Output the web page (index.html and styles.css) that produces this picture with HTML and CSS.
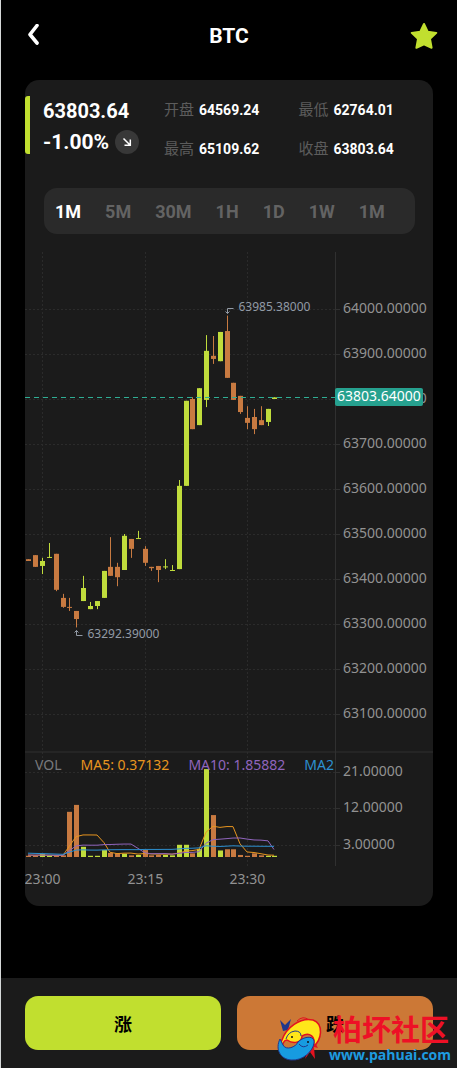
FILE: index.html
```html
<!DOCTYPE html>
<html lang="zh-CN">
<head>

	<meta charset="utf-8" />
	<meta name="viewport" content="width=device-width, initial-scale=1" />
	<title>BTC</title>

	<link rel="stylesheet" href="styles.css">

</head>

<body>

<header class="topbar">
	<button class="icon-btn" type="button" aria-label="返回">
		<svg width="24" height="24" viewBox="0 0 24 24"><path d="M15 1.500 L8 10.500 L15 19" fill="none" stroke="#fff" stroke-width="3.600" stroke-linecap="round" stroke-linejoin="round" /></svg>
	</button>
	<h1>BTC</h1>
	<button class="icon-btn" type="button" aria-label="收藏">
		<svg width="28" height="28" viewBox="0 0 28 28"><path d="M14 2 L17.700 9.700 L26.300 10.900 L20 16.900 L21.600 25.800 L14 22.400 L6.400 25.800 L8 16.900 L1.700 10.900 L10.300 9.700 Z" fill="#c1df2f" stroke="#c1df2f" stroke-width="2" stroke-linejoin="round" /></svg>
	</button>
</header>

<main class="card">
	<section class="summary">
		<div class="quote">
			<div class="price">63803.64</div>
			<div class="change">
				-1.00%
				<span class="trend">
					<svg width="24" height="24" viewBox="0 0 24 24"><path d="M8.500 8.500 L15 15 M15.300 9.500 V15.300 H9.500" fill="none" stroke="#fff" stroke-width="1.500" /></svg>
				</span>
			</div>
		</div>
		<dl class="stats">
			<div><dt>开盘</dt><dd>64569.24</dd></div>
			<div><dt>最低</dt><dd>62764.01</dd></div>
			<div><dt>最高</dt><dd>65109.62</dd></div>
			<div><dt>收盘</dt><dd>63803.64</dd></div>
		</dl>
	</section>

	<nav class="periods">
		<button type="button" class="active">1M</button>
		<button type="button">5M</button>
		<button type="button">30M</button>
		<button type="button">1H</button>
		<button type="button">1D</button>
		<button type="button">1W</button>
		<button type="button">1M</button>
	</nav>

	<svg id="chart" class="chart"></svg>
</main>

<footer class="actions">
	<button type="button" class="up">涨</button>
	<button type="button" class="down">跌</button>
</footer>

<div class="watermark">
	<svg width="48" height="46" viewBox="0 0 48 46">
		<path d="M8 15 L5 4 L10 9 L16 3 L13 14 Z" fill="#20378c" />
		<path d="M22 5 Q28 -1 34 4" fill="none" stroke="#e3121f" />
		<path d="M37 21 L43 32 L39 31 L40 43 L35 36 L30 43 L34 30 Z" fill="#e3121f" />
		<path d="M7 24 C11 12 25 1 38 4 C49 8 47 24 38 31 C42 20 34 16 27 20 C27 27 18 28 12 24 C9 24 7 28 7 33 C4 31 5 27 7 24 Z" fill="#ffe61a" stroke="#e3121f" stroke-width="1.500" />
		<path d="M5 23 C0 33 5 43 16 44 C28 45 38 35 39 27 C40 19 29 20 23 26 C21 31 11 35 8 29 C7 27 6 25 5 23 Z" fill="#179be0" stroke="#20378c" />
		<path d="M24 28 Q28 33 33 29 M11 23 Q13 16 20 15 Q26 15 26 20" fill="none" stroke="#20378c" />
		<circle cx="17" cy="21" r="1" fill="#111" />
		<circle cx="33" cy="26" r="1" fill="#111" />
	</svg>
	<div>
		<div class="wm-name">柏坏社区</div>
		<div class="wm-url">www.pahuai.com</div>
	</div>
</div>

<script src="chart.js"></script>

</body>
</html>
```

FILE: styles.css
```css
* {
	box-sizing: border-box;
}
body {
	display: flex;
	flex-direction: column;
	position: relative;
	min-height: 100vh;
	margin: 0;
	border-left: 1px solid #d5d8d8;
	background: #000;
	color: #fff;
	font-family: Roboto, 'Noto Sans CJK SC', sans-serif;
}
button {
	padding: 0;
	border: 0;
	background: none;
	font-family: inherit;
	font-weight: bold;
	cursor: pointer;
}
svg {
	display: block;
}

.topbar {
	display: flex;
	align-items: center;
	justify-content: space-between;
	height: 72px;
	padding: 0 19px;
}
.topbar h1 {
	margin: 0;
	font-size: 21px;
}
.icon-btn {
	display: flex;
	justify-content: center;
	width: 28px;
}

.card {
	margin: 8px 24px 72px 24px;
	padding-top: 16px;
	border-radius: 14px;
	background: #1b1b1b;
}

.summary {
	display: flex;
	height: 67px;
}
.quote {
	width: 139px;
	height: 58px;
	padding-left: 13px;
	border-left: 5px solid #c1df2f;
	border-radius: 3px;
	font-size: 20px;
	font-weight: bold;
}
.price {
	height: 30px;
	line-height: 30px;
}
.change {
	display: flex;
	align-items: center;
	gap: 6px;
	height: 32px;
	font-size: 21px;
}
.trend {
	border-radius: 50%;
	background: #383838;
}
.stats {
	display: grid;
	flex: 1;
	grid-template-columns: 1fr 1fr;
	grid-template-rows: 28px 28px;
	row-gap: 11px;
	margin: 0;
}
.stats div {
	display: flex;
	align-items: center;
	gap: 5px;
}
.stats dt {
	color: #5c5c5c;
	font-size: 15px;
	line-height: 20px;
}
.stats dd {
	margin: 0;
	font-size: 14px;
	font-weight: bold;
}

.periods {
	display: flex;
	gap: 24px;
	height: 46px;
	margin: 25px 18px 18px 19px;
	padding-left: 11px;
	border-radius: 13px;
	background: #2a2a2a;
}
.periods button {
	color: #636363;
	font-size: 18px;
}
.periods .active {
	color: #fff;
}

.chart {
	width: 100%;
	height: 654px;
	font-family: 'Noto Sans', sans-serif;
	font-size: 14px;
}
.chart .grid {
	stroke: #2b2b2b;
	stroke-dasharray: 2 2;
}
.chart .axis {
	stroke: #303030;
}
.chart .label {
	fill: #929292;
}
.chart .mark {
	fill: #929aa5;
	font-size: 12px;
}
.chart .mark-arrow {
	fill: none;
	stroke: #929aa5;
}
.chart .last {
	stroke: #2fae94;
	stroke-dasharray: 5 4;
}
.chart .tag {
	fill: #26a18f;
}
.chart .tag-text {
	fill: #fff;
}
.chart .rise {
	fill: #c0dc3c;
}
.chart .fall {
	fill: #c87a41;
}
.chart .ma {
	fill: none;
	stroke-width: 1;
}

.actions {
	display: flex;
	gap: 16px;
	margin-top: auto;
	padding: 18px 24px;
	background: #1b1b1b;
}
.actions button {
	flex: 1;
	height: 54px;
	border-radius: 13px;
	color: #000;
	font-size: 18px;
}
.actions .up {
	background: #c1df2f;
}
.actions .down {
	background: #cc7836;
}

/* site stamp, lies over the footer */
.watermark {
	display: flex;
	gap: 6px;
	position: absolute;
	right: 6px;
	bottom: 4px;
	pointer-events: none;
}
.wm-name {
	padding-left: 4px;
	color: #ee1026;
	font-size: 29px;
	font-weight: bold;
	line-height: 30px;
}
.wm-url {
	color: #1e9be0;
	font-family: 'Open Sans', sans-serif;
	font-size: 14px;
	font-weight: bold;
	line-height: 18px;
}
```

FILE: chart.js
```js
// open, close, high, low, volume
var candles = [
	[63444, 63440, 63444, 63440, 0.3],
	[63453, 63427, 63453, 63427, 0.3],
	[63429, 63440, 63447, 63411, 0.7],
	[63447, 63449, 63480, 63447, 0.3],
	[63456, 63376, 63456, 63373, 0.3],
	[63358, 63338, 63367, 63336, 0.4],
	[63338, 63336, 63358, 63329, 11.1],
	[63329, 63311, 63329, 63292.39, 12.8],
	[63351, 63380, 63407, 63351, 2.5],
	[63333, 63340, 63349, 63333, 0.3],
	[63340, 63351, 63351, 63333, 0.3],
	[63358, 63418, 63418, 63358, 1.7],
	[63427, 63407, 63493, 63407, 1],
	[63427, 63404, 63436, 63384, 0.9],
	[63420, 63496, 63500, 63420, 0.8],
	[63489, 63467, 63489, 63447, 0.4],
	[63489, 63491, 63507, 63489, 0.5],
	[63467, 63436, 63473, 63429, 1.7],
	[63427, 63424, 63427, 63418, 0.4],
	[63429, 63420, 63429, 63393, 0.5],
	[63426, 63428, 63444, 63422, 0.5],
	[63418, 63420, 63431, 63418, 0.4],
	[63422, 63607, 63620, 63422, 3],
	[63607, 63796, 63796, 63607, 3],
	[63800, 63733, 63804, 63733, 0.9],
	[63742, 63824, 63824, 63742, 2],
	[63798, 63907, 63942, 63782, 21.6],
	[63896, 63889, 63940, 63878, 10.3],
	[63884, 63949, 63949, 63884, 1.6],
	[63951, 63847, 63985.38, 63847, 1.9],
	[63836, 63798, 63836, 63798, 1.9],
	[63807, 63771, 63807, 63767, 0.5],
	[63758, 63747, 63784, 63733, 0.3],
	[63760, 63733, 63778, 63722, 0.9],
	[63753, 63742, 63784, 63742, 0.4],
	[63749, 63778, 63778, 63740, 0.3],
	[63800, 63803.64, 63803.64, 63800, 0.3]
];

// volumes of the 20 minutes before the first candle
var earlier = [1.5, 1.5, 1.5, 1.5, 1.5, 1.5, 1.5, 1.5, 1.5, 1.5, 0.5, 0.5, 0.5, 0.5, 0.5, 0.5, 0.5, 0.5, 0.5, 0.5];
var volumes = earlier.concat(candles.map(function(c) { return c[4]; }));

var chart = document.getElementById('chart');
var AXIS = 97;
var SLOTS = 45.5;
var VOL_TOP = 500;
var VOL_BASE = 605;
var BOTTOM = 614;

var priceY = function(p) {
	return 57 + (64000 - p) * 0.45;
};

var volY = function(v) {
	return VOL_BASE - v * 4.07;
};

var line = function(cls, x1, y1, x2, y2) {
	return '<line class="' + cls + '" x1="' + x1 + '" y1="' + y1 + '" x2="' + x2 + '" y2="' + y2 + '" />';
};

var rect = function(cls, x, y, w, h) {
	return '<rect class="' + cls + '" x="' + x + '" y="' + y + '" width="' + w + '" height="' + h + '" />';
};

var text = function(cls, x, y, s, anchor) {
	return '<text class="' + cls + '" x="' + x + '" y="' + y + '" text-anchor="' + (anchor || 'start') + '">' + s + '</text>';
};

var average = function(i, n) {
	var end = earlier.length + i + 1;
	return volumes.slice(end - n, end).reduce(function(a, b) { return a + b; }) / n;
};

var draw = function() {
	var width = chart.clientWidth || chart.getBoundingClientRect().width;
	var plot = width - AXIS;
	var axisX = plot - 0.5;
	var out = '';

	var x = function(i) {
		return Math.round((i + 0.5) * plot / SLOTS);
	};

	var gridRow = function(y, label) {
		y = Math.round(y) + 0.5;
		out += line('grid', 0, y, plot, y);
		out += line('axis', plot, y, plot + 4, y);
		out += text('label', plot + 7, y + 3, label);
	};

	for (var p = 64000; p >= 63100; p -= 100) {
		gridRow(priceY(p), p.toFixed(5));
	}
	[21, 12, 3].forEach(function(v) {
		gridRow(volY(v), v.toFixed(5));
	});

	[[2, '23:00'], [17, '23:15'], [32, '23:30']].forEach(function(t) {
		var tx = x(t[0]) + 0.5;
		out += line('grid', tx, 0, tx, BOTTOM);
		out += text('label', tx, 632, t[1], 'middle');
	});

	out += line('axis', 0, VOL_TOP, width, VOL_TOP);
	out += line('axis', axisX, 0, axisX, BOTTOM);

	candles.forEach(function(c, i) {
		var cls = c[1] > c[0] ? 'rise' : 'fall';
		var top = priceY(Math.max(c[0], c[1]));
		var bottom = priceY(Math.min(c[0], c[1]));
		out += rect(cls, x(i), priceY(c[2]), 1, priceY(c[3]) - priceY(c[2]));
		out += rect(cls, x(i) - 2, top, 5, Math.max(1, bottom - top));
		out += rect(cls, x(i) - 2, volY(c[4]), 5, VOL_BASE - volY(c[4]));
	});

	[[5, '#e8951f'], [10, '#9065bd'], [20, '#2d90d0']].forEach(function(ma) {
		var points = candles.map(function(c, i) {
			return x(i) + ',' + volY(average(i, ma[0]));
		});
		out += '<polyline class="ma" stroke="' + ma[1] + '" points="' + points.join(' ') + '" />';
	});

	// legend stops at the axis
	out += '<svg width="' + plot + '" height="' + BOTTOM + '"><text x="10" y="518">' +
		'<tspan fill="#78797d">VOL</tspan>' +
		'<tspan dx="19" fill="#e8951f">MA5: 0.37132</tspan>' +
		'<tspan dx="19" fill="#9065bd">MA10: 1.85882</tspan>' +
		'<tspan dx="19" fill="#2d90d0">MA2</tspan></text></svg>';

	var hx = x(29) + 0.5;
	var hy = Math.round(priceY(63985.38));
	out += '<path class="mark-arrow" d="M' + (hx + 6) + ' ' + (hy - 7.5) + ' H' + hx + ' v5 m-2 -2 l2 2 l2 -2" />';
	out += text('mark', hx + 11, hy - 5, '63985.38000');

	var lx = x(7) + 0.5;
	var ly = Math.round(priceY(63292.39));
	out += '<path class="mark-arrow" d="M' + (lx + 6) + ' ' + (ly + 8.5) + ' H' + lx + ' v-5 m-2 2 l2 -2 l2 2" />';
	out += text('mark', lx + 11, ly + 11, '63292.39000');

	out += line('last', 0, 145.5, plot, 145.5);
	out += '<rect class="tag" x="' + (plot - 1) + '" y="136" width="88" height="18" rx="2" />';
	out += text('tag-text', plot + 1, 149, '63803.64000');

	chart.innerHTML = out;
};

window.addEventListener('resize', draw);
draw();
```
